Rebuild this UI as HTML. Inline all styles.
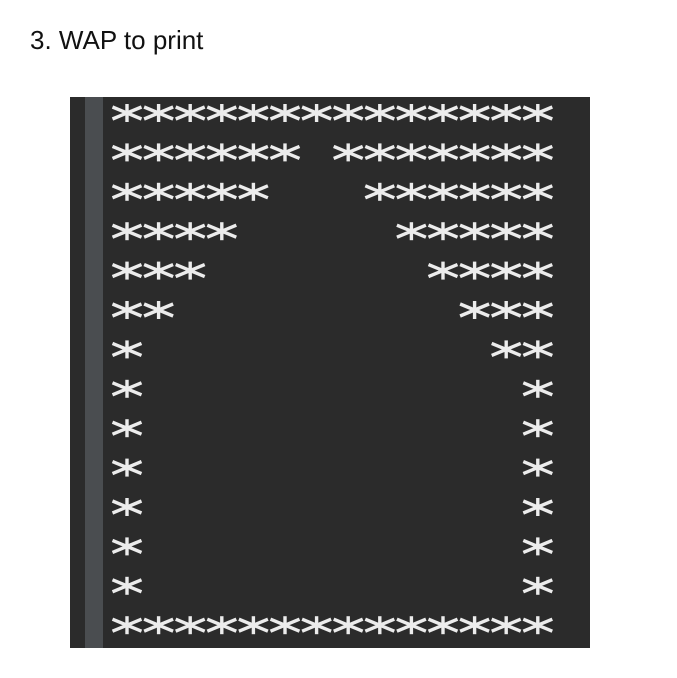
<!DOCTYPE html>
<html><head><style>
body{margin:0;width:677px;height:678px;background:#fff;overflow:hidden;position:relative;font-family:"Liberation Sans",Arial,sans-serif}
.t{position:absolute;left:30px;top:25px;font-size:26px;color:#111}
.box{position:absolute;left:70px;top:97px;width:520px;height:551px;background:#2b2b2b}
.s1{position:absolute;left:85px;top:97px;width:18px;height:551px;background:#4a4d50}
svg{position:absolute;left:0;top:0}
</style></head><body>
<div class="t">3. WAP to print</div>
<div class="box"></div><div class="s1"></div>
<svg id="g" width="677" height="678"></svg>
<script>
var s='',g=document.getElementById('g');
function star(x,y){s+='<g stroke="#ececec" stroke-width="3.4" stroke-linecap="butt"><line x1="'+x+'" y1="'+(y-9)+'" x2="'+x+'" y2="'+(y+9)+'"/><line x1="'+(x-14.5)+'" y1="'+(y-6)+'" x2="'+(x+14.5)+'" y2="'+(y+6)+'"/><line x1="'+(x-14.5)+'" y1="'+(y+6)+'" x2="'+(x+14.5)+'" y2="'+(y-6)+'"/></g>';}
for(var r=0;r<14;r++){var y=113+r*39.4;for(var c=0;c<14;c++){var on;
if(r==0||r==13)on=true;else if(r<=6)on=(c<=6-r)||(c>=6+r);else on=(c==0||c==13);
if(on)star(127+c*31.6,y);}}
g.innerHTML=s;
</script>
</body></html>
